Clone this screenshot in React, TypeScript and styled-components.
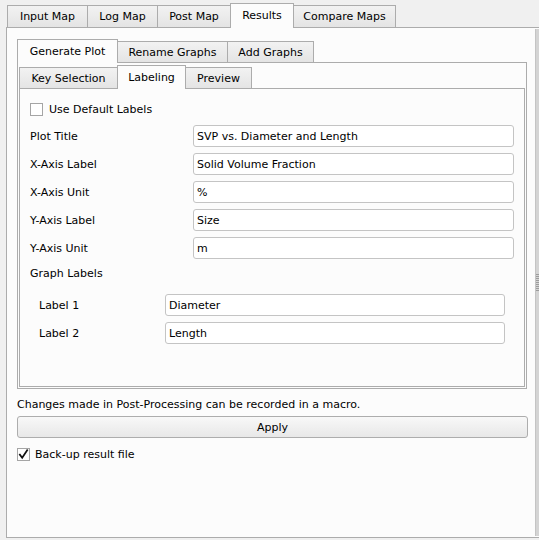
import React from "react";
import styled, { createGlobalStyle } from "styled-components";

const Global = createGlobalStyle`
  html, body { margin: 0; padding: 0; background: #f0f0f0; overflow: hidden; }
  body {
    font-family: "DejaVu Sans", Tahoma, sans-serif;
    font-size: 11px;
    color: #000;
  }
  #root { width: 539px; height: 540px; overflow: hidden; }
`;

const Page = styled.div`
  width: 539px;
  height: 540px;
  padding-top: 3px;
  box-sizing: border-box;
  overflow: hidden;
`;

const TabBar = styled.div<{ $indent: number }>`
  display: flex;
  align-items: flex-end;
  padding-left: ${(p) => p.$indent}px;
  position: relative;
  z-index: 1;
`;

const Tab = styled.div<{ $active?: boolean; $w: number; $h: number }>`
  box-sizing: border-box;
  position: relative;
  width: ${(p) => p.$w}px;
  height: ${(p) => (p.$active ? p.$h + 3 : p.$h)}px;
  margin-left: -1px;
  margin-bottom: ${(p) => (p.$active ? -1 : 0)}px;
  &:first-child { margin-left: 0; }
  border: 1px solid #acacac;
  border-bottom: none;
  background: ${(p) => (p.$active ? "#fcfcfc" : "linear-gradient(#f2f2f2, #e4e4e4)")};
  z-index: ${(p) => (p.$active ? 2 : 0)};
  display: flex;
  align-items: center;
  justify-content: center;
  padding-bottom: ${(p) => (p.$active ? 1 : 0)}px;
  white-space: nowrap;
`;

const MainPanel = styled.div`
  box-sizing: border-box;
  margin-left: 6px;
  width: 560px;
  height: 511px;
  border: 1px solid #acacac;
  background: #fcfcfc;
  display: flex;
`;

const MainContent = styled.div`
  box-sizing: border-box;
  width: 528px;
  flex: none;
  padding: 11px 8px 0 10px;
  display: flex;
  flex-direction: column;
`;

const ScrollStrip = styled.div`
  width: 17px;
  flex: none;
  margin: 1px 0;
  background: #d4d4d4;
  border-left: 1px solid #c4c4c4;
  display: flex;
  align-items: center;
`;

const Grip = styled.div`
  width: 100%;
  height: 17px;
  background: repeating-linear-gradient(#9c9c9c 0 1px, transparent 1px 2px);
`;

const Panel = styled.div<{ $h?: number; $pad: string }>`
  box-sizing: border-box;
  border: 1px solid #acacac;
  background: #fcfcfc;
  ${(p) => (p.$h ? `height: ${p.$h}px;` : "flex: 1;")}
  padding: ${(p) => p.$pad};
  display: flex;
  flex-direction: column;
`;

const Form = styled.div`
  display: grid;
  grid-template-columns: 163px 321px;
  grid-auto-rows: 22px;
  row-gap: 6px;
  align-items: center;
  margin-top: 9px;
`;

const SubForm = styled.div`
  display: grid;
  grid-template-columns: 126px 340px;
  grid-auto-rows: 22px;
  row-gap: 6px;
  align-items: center;
  padding-left: 9px;
  margin-top: 13px;
`;

const SectionLabel = styled.div`
  margin-top: 8px;
  height: 14px;
  line-height: 14px;
`;

const Label = styled.div`
  white-space: nowrap;
`;

const Field = styled.div`
  box-sizing: border-box;
  height: 22px;
  border: 1px solid #c4c4c4;
  border-radius: 3px;
  background: #ffffff;
  padding: 0 3px;
  display: flex;
  align-items: center;
  white-space: nowrap;
  overflow: hidden;
`;

const CheckRow = styled.div`
  display: flex;
  align-items: center;
  gap: 6px;
  height: 14px;
`;

const Box = styled.div`
  box-sizing: border-box;
  width: 13px;
  height: 13px;
  border: 1px solid #a5a5a5;
  background: #fff;
  display: flex;
  align-items: center;
  justify-content: center;
`;

const Note = styled.div`
  margin-top: 9px;
  height: 13px;
  line-height: 13px;
  white-space: nowrap;
`;

const Button = styled.div`
  box-sizing: border-box;
  margin-top: 5px;
  height: 22px;
  width: 511px;
  border: 1px solid #adadad;
  border-radius: 3px;
  background: linear-gradient(#f8f8f8, #e8e8e8);
  display: flex;
  align-items: center;
  justify-content: center;
`;

const BottomCheck = styled(CheckRow)`
  margin-top: 9px;
  gap: 5px;
`;

function Check({ checked }: { checked?: boolean }) {
  return (
    <Box>
      {checked && (
        <svg width="11" height="11" viewBox="0 0 11 11">
          <path d="M1.8 5.6 L4.2 8.8 L9.2 1.2" fill="none" stroke="#111" strokeWidth="1.7" strokeLinecap="square" />
        </svg>
      )}
    </Box>
  );
}

const mainTabs = [
  { t: "Input Map", w: 81 },
  { t: "Log Map", w: 71 },
  { t: "Post Map", w: 74 },
  { t: "Results", w: 64, a: true },
  { t: "Compare Maps", w: 103 },
];
const subTabs = [
  { t: "Generate Plot", w: 101, a: true },
  { t: "Rename Graphs", w: 111 },
  { t: "Add Graphs", w: 87 },
];
const thirdTabs = [
  { t: "Key Selection", w: 99 },
  { t: "Labeling", w: 69, a: true },
  { t: "Preview", w: 67 },
];

const fields = [
  ["Plot Title", "SVP vs. Diameter and Length"],
  ["X-Axis Label", "Solid Volume Fraction"],
  ["X-Axis Unit", "%"],
  ["Y-Axis Label", "Size"],
  ["Y-Axis Unit", "m"],
];

export default function App() {
  return (
    <Page>
      <Global />
      <TabBar $indent={7}>
        {mainTabs.map((x) => (
          <Tab key={x.t} $w={x.w} $h={22} $active={x.a}>{x.t}</Tab>
        ))}
      </TabBar>
      <MainPanel>
        <MainContent>
          <TabBar $indent={0}>
            {subTabs.map((x) => (
              <Tab key={x.t} $w={x.w} $h={21} $active={x.a}>{x.t}</Tab>
            ))}
          </TabBar>
          <Panel $h={327} $pad="2px 1px 1px 1px">
            <TabBar $indent={0}>
              {thirdTabs.map((x) => (
                <Tab key={x.t} $w={x.w} $h={21} $active={x.a}>{x.t}</Tab>
              ))}
            </TabBar>
            <Panel $pad="13px 11px 0 10px">
              <CheckRow>
                <Check />
                <span>Use Default Labels</span>
              </CheckRow>
              <Form>
                {fields.map(([l, v]) => (
                  <React.Fragment key={l}>
                    <Label>{l}</Label>
                    <Field>{v}</Field>
                  </React.Fragment>
                ))}
              </Form>
              <SectionLabel>Graph Labels</SectionLabel>
              <SubForm>
                <Label>Label 1</Label>
                <Field>Diameter</Field>
                <Label>Label 2</Label>
                <Field>Length</Field>
              </SubForm>
            </Panel>
          </Panel>
          <Note>Changes made in Post-Processing can be recorded in a macro.</Note>
          <Button>Apply</Button>
          <BottomCheck>
            <Check checked />
            <span>Back-up result file</span>
          </BottomCheck>
        </MainContent>
        <ScrollStrip>
          <Grip />
        </ScrollStrip>
      </MainPanel>
    </Page>
  );
}
